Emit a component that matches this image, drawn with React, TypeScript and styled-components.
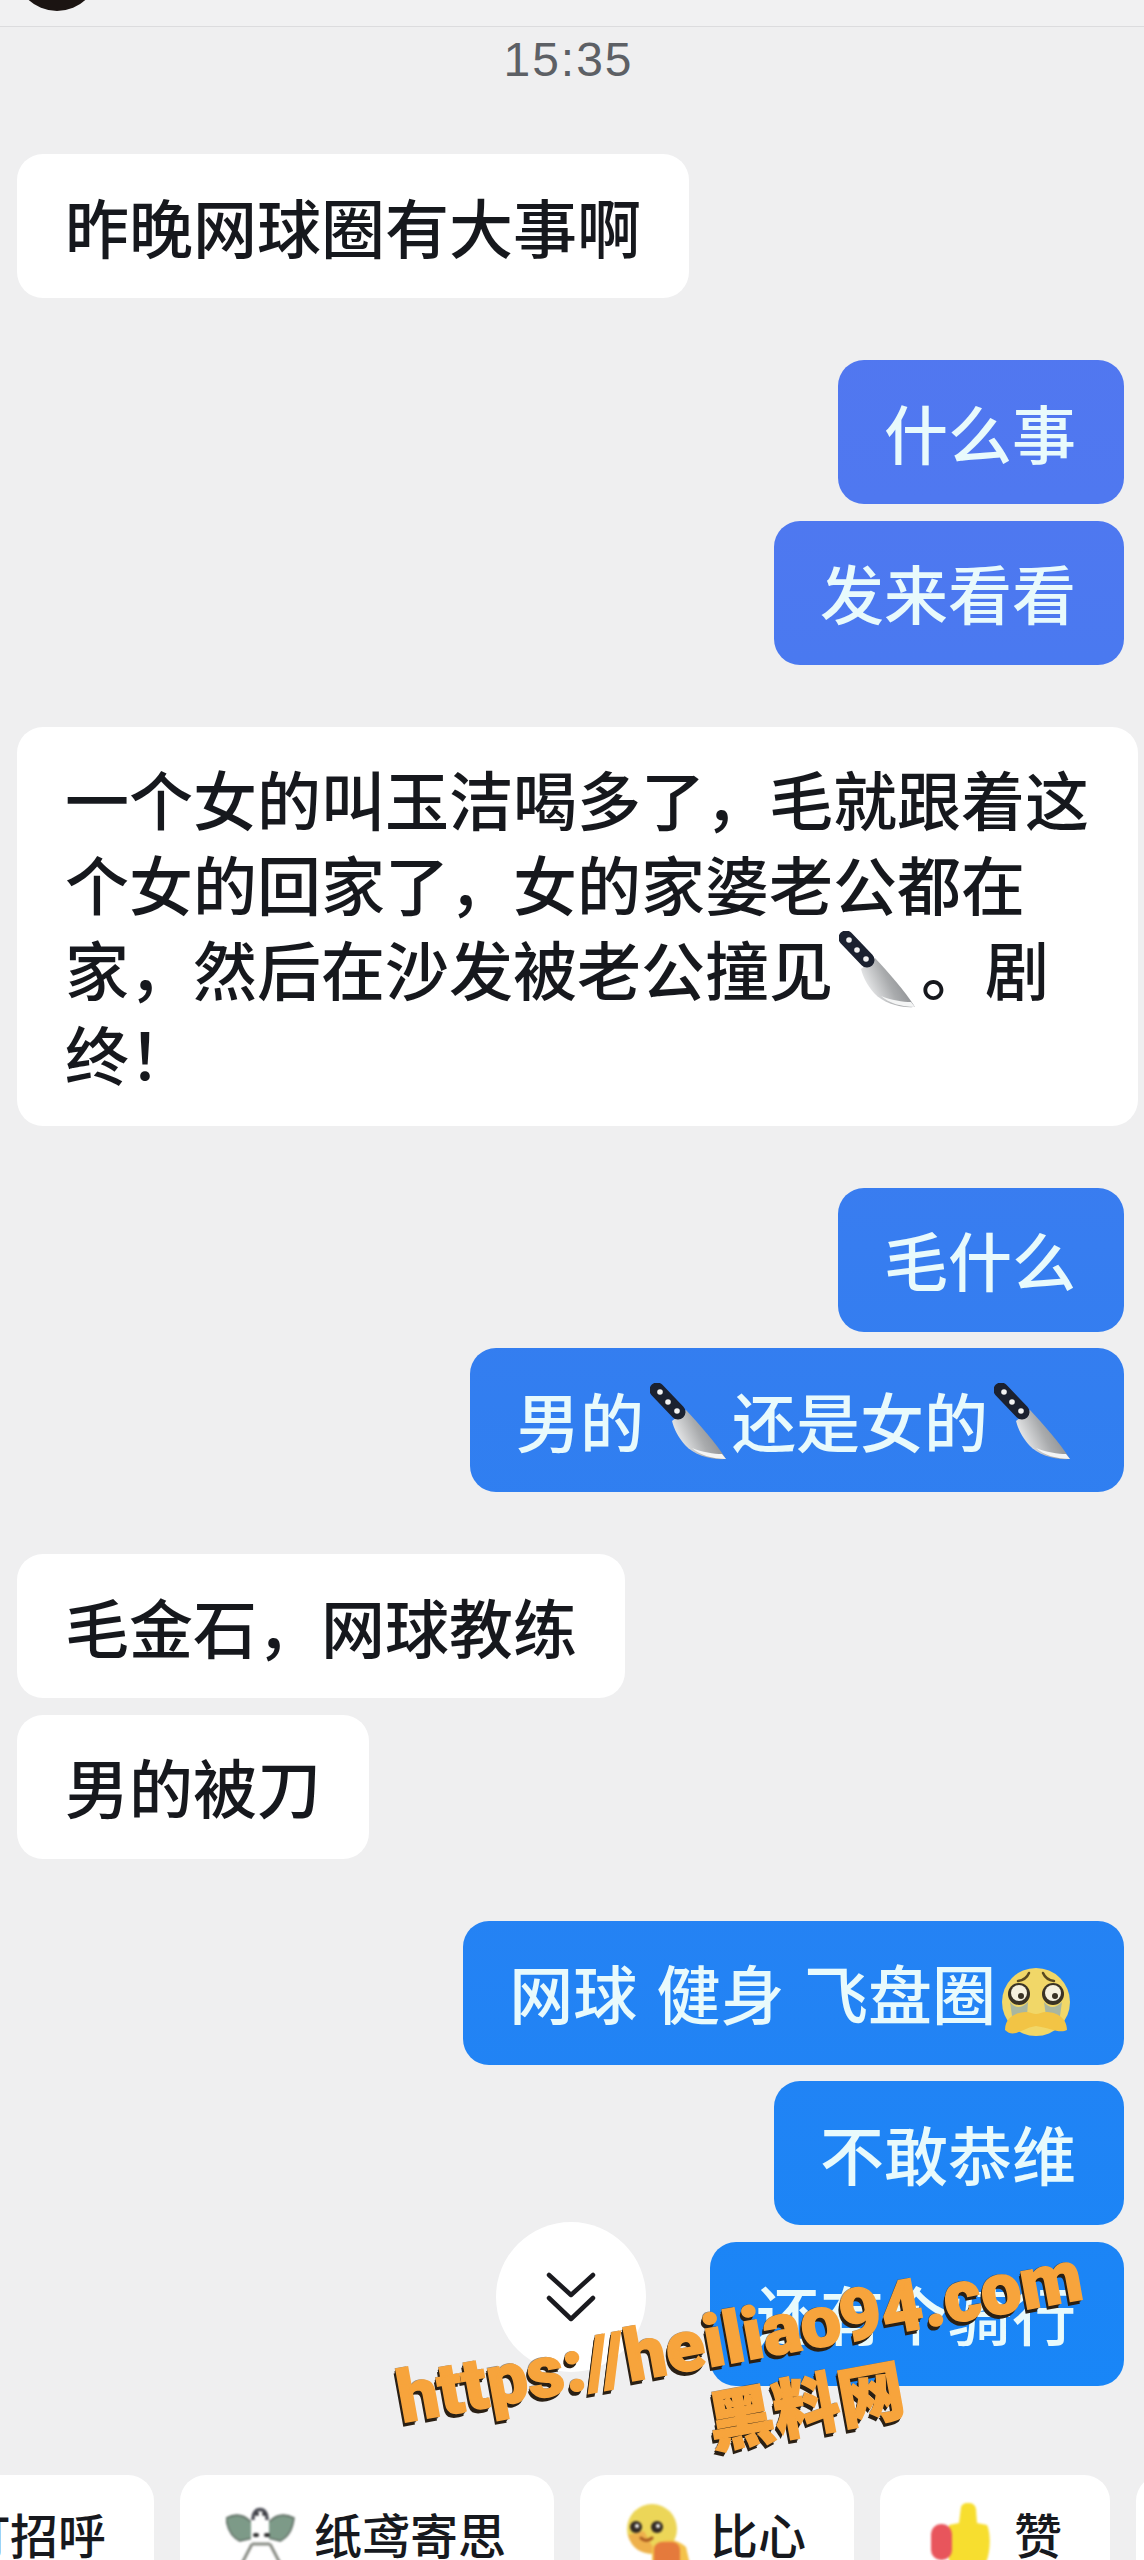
import React, { useId } from 'react';
import styled, { createGlobalStyle } from 'styled-components';

const GlobalStyle = createGlobalStyle`
  html, body { margin: 0; padding: 0; }
  body {
    background: #efeff0;
    font-family: 'Noto Sans CJK SC', 'Liberation Sans', sans-serif;
  }
`;

const Page = styled.div`
  position: relative;
  height: 100vh;
  display: flex;
  flex-direction: column;
  overflow: hidden;
  background: #efeff0;
`;

const TopBar = styled.header`
  height: 26px;
  flex-shrink: 0;
  display: flex;
  align-items: flex-end;
  padding-left: 15px;
  overflow: hidden;
  background: #f1f1f2;
  border-bottom: 1px solid #dcdcde;
`;

const Avatar = styled.div`
  width: 84px;
  height: 84px;
  flex-shrink: 0;
  margin-bottom: 15px;
  border-radius: 50%;
  background: #1b1412;
`;

const MessageList = styled.main`
  flex: 1;
  min-height: 0;
  display: flex;
  flex-direction: column;
  gap: 62px;
  padding: 0 6px 0 17px;
`;

const TimeStamp = styled.div`
  height: 64px;
  margin-bottom: 1px;
  padding-right: 18px;
  display: flex;
  align-items: center;
  justify-content: center;
  font-family: 'Liberation Sans', sans-serif;
  font-size: 48px;
  letter-spacing: 2px;
  color: #5d6065;
`;

const Group = styled.section<{ $sent?: boolean }>`
  display: flex;
  flex-direction: column;
  align-items: ${(p) => (p.$sent ? 'flex-end' : 'flex-start')};
  gap: 16.5px;
  padding-right: ${(p) => (p.$sent ? '14px' : '0')};
`;

const Bubble = styled.div<{ $sent?: boolean }>`
  padding: 28.5px 48px 30.5px ${(p) => (p.$sent ? '46px' : '48px')};
  border-radius: 26px;
  font-size: 64px;
  font-weight: 500;
  line-height: 85px;
  word-spacing: 5px;
  color: ${(p) => (p.$sent ? '#e8fafc' : '#16181d')};
  background: ${(p) =>
    p.$sent ? 'linear-gradient(180deg, #5675ef 0, #4f78f0 500px, #327ef0 1400px, #1886f7 2400px) fixed' : '#ffffff'};
`;

const EmojiSvg = styled.svg<{ $gap?: number; $lift?: number }>`
  display: inline-block;
  vertical-align: ${(p) => p.$lift ?? 11}px;
  margin: -24px ${(p) => p.$gap ?? 6}px -24px;
  filter: blur(0.4px);
`;

const ScrollDownButton = styled.button`
  position: absolute;
  left: 496px;
  top: 2222px;
  width: 150px;
  height: 150px;
  display: flex;
  align-items: center;
  justify-content: center;
  padding: 0;
  border: none;
  border-radius: 50%;
  background: #ffffff;
  color: #1a1a1f;
`;

const Watermark = styled.div`
  position: absolute;
  left: 400px;
  top: 2295px;
  width: 710px;
  transform: rotate(-10.3deg);
  transform-origin: center;
  font-family: 'Roboto', 'Noto Sans CJK SC', sans-serif;
  font-weight: 900;
  color: #f7a43c;
  -webkit-text-stroke: 1.5px #f7a43c;
  text-shadow: -1px 1px 0 #2a2015, -2px 2px 0 #2a2015, -3px 4px 0 #2a2015, -1px -1px 0 rgba(40, 30, 20, 0.5);
  white-space: nowrap;
`;

const WatermarkUrl = styled.div`
  font-size: 72px;
  line-height: 80px;
`;

const WatermarkName = styled.div`
  padding-left: 301px;
  font-size: 66px;
  line-height: 84px;
`;

const QuickBar = styled.nav`
  height: 85px;
  flex-shrink: 0;
  display: flex;
  gap: 26px;
  margin-left: -172px;
  overflow: hidden;
`;

const Chip = styled.div`
  height: 110px;
  flex-shrink: 0;
  display: flex;
  align-items: flex-start;
  gap: 18px;
  padding: 28px 48px 0 46px;
  box-sizing: border-box;
  border-radius: 26px;
  background: #ffffff;
`;

const ChipLabel = styled.span`
  font-size: 48px;
  font-weight: 500;
  line-height: 60px;
  color: #17191e;
`;

const ChipIcon = styled.svg`
  flex-shrink: 0;
  filter: blur(0.8px);
`;

const Knife: React.FC<{ gap?: number }> = ({ gap }) => {
  const id = useId();
  return (
    <EmojiSvg $gap={gap} width="76" height="77" viewBox="0 0 76 77">
      <defs>
        <linearGradient id={id} x1="0.1" y1="0.6" x2="0.8" y2="0.3">
          <stop offset="0" stopColor="#e8e9ea" />
          <stop offset="0.55" stopColor="#a9abad" />
          <stop offset="1" stopColor="#8b8d90" />
        </linearGradient>
      </defs>
      <path d="M22 38 L36 27 C50 42 66 60 76 76 C60 77 44 72 35 62 C28 54 24 46 22 38 Z" fill={`url(#${id})`} />
      <path d="M76 76 C62 76 50 72 42 65 C52 69 64 71 72 71 Z" fill="#f4f5f5" />
      <line x1="7" y1="7" x2="28" y2="29" stroke="#1b2130" strokeWidth="15" strokeLinecap="round" />
      <circle cx="10" cy="9" r="2.8" fill="#f2f2f2" />
      <circle cx="18" cy="19" r="2.8" fill="#f2f2f2" />
      <circle cx="27" cy="28" r="2.8" fill="#f2f2f2" />
    </EmojiSvg>
  );
};

const PleadingFace: React.FC = () => (
  <EmojiSvg $gap={4} $lift={3} width="72" height="72" viewBox="0 0 72 72">
    <circle cx="36" cy="34" r="34" fill="#f1d768" />
    <path d="M18 13 Q26 12 29 5 M54 13 Q46 12 43 5" fill="none" stroke="#5a4a20" strokeWidth="2.5" strokeLinecap="round" />
    <path d="M10 34 Q18 44 28 34 L27 48 L12 48 Z M44 34 Q52 44 62 34 L60 48 L46 48 Z" fill="#a9b6a0" />
    <circle cx="19" cy="26" r="11" fill="#3a3325" />
    <circle cx="53" cy="26" r="11" fill="#3a3325" />
    <circle cx="19" cy="25" r="8" fill="#f6f1df" />
    <circle cx="53" cy="25" r="8" fill="#f6f1df" />
    <circle cx="21" cy="28" r="3" fill="#3a3325" />
    <circle cx="55" cy="28" r="3" fill="#3a3325" />
    <path d="M5 62 C5 48 18 44 26 44 C30 44 33 46 36 46 C39 46 42 44 46 44 C54 44 67 48 67 62 C60 66 50 60 36 58 C22 60 14 71 5 62 Z" fill="#f2c445" />
  </EmojiSvg>
);

const ChevronsIcon: React.FC = () => (
  <svg width="50" height="50" viewBox="0 0 50 50" fill="none" stroke="currentColor" strokeWidth="4.5" strokeLinecap="round" strokeLinejoin="round">
    <path d="M3 3 L25 23 L47 3" />
    <path d="M3 26 L25 47 L47 26" />
  </svg>
);

const KiteIcon: React.FC = () => (
  <ChipIcon width="70" height="70" viewBox="0 0 70 70">
    <path d="M0 15 Q14 8 24 18 L32 20 L32 34 L14 38 C5 34 1 24 0 15 Z" fill="#7d9a88" stroke="#5e6b62" strokeWidth="1.5" />
    <path d="M68 15 Q54 8 44 18 L38 20 L38 34 L54 38 C63 34 67 24 68 15 Z" fill="#7d9a88" stroke="#5e6b62" strokeWidth="1.5" />
    <path d="M25 10 C25 0 43 0 43 10 L43 38 L25 38 Z" fill="#ffffff" />
    <path d="M27 17 C26 3 42 3 41 17" fill="none" stroke="#4c4d55" strokeWidth="3.5" />
    <circle cx="31" cy="11" r="2" fill="#3a3a40" />
    <circle cx="38" cy="11" r="2" fill="#3a3a40" />
    <ellipse cx="30" cy="32" rx="3" ry="2" fill="#2b2b2b" />
    <ellipse cx="41" cy="32" rx="3" ry="2" fill="#2b2b2b" />
    <path d="M26 41 L13 66 M44 41 L57 66 M26 41 L44 41" fill="none" stroke="#8a8d86" strokeWidth="3" />
  </ChipIcon>
);

const DuckIcon: React.FC = () => (
  <ChipIcon width="66" height="70" viewBox="0 0 66 70">
    <circle cx="26" cy="26" r="25" fill="#ecd658" />
    <path d="M2 32 C6 46 16 52 30 50 L18 28 Z" fill="#eeb04c" />
    <circle cx="10" cy="24" r="6" fill="#322a24" />
    <circle cx="31" cy="24" r="6" fill="#322a24" />
    <circle cx="11" cy="23" r="2" fill="#ffffff" />
    <circle cx="32" cy="23" r="2" fill="#ffffff" />
    <path d="M15 35 Q20 40 26 35" fill="none" stroke="#a85a20" strokeWidth="3" strokeLinecap="round" />
    <path d="M26 44 Q44 30 60 44 L66 70 L26 70 Z" fill="#f4c24a" />
    <rect x="28" y="39" width="26" height="31" rx="8" fill="#e57a3c" />
  </ChipIcon>
);

const ThumbIcon: React.FC = () => (
  <ChipIcon width="70" height="70" viewBox="-5 0 70 70">
    <path d="M30 4 C32 -2 44 -2 45 6 L46 20 L56 22 C60 30 60 50 54 62 L18 62 L18 22 L28 20 Z" fill="#f7de2f" />
    <rect x="0" y="21" width="21" height="36" rx="10" fill="#e8555c" />
  </ChipIcon>
);

const App: React.FC = () => (
  <Page lang="zh-CN">
    <GlobalStyle />
    <TopBar>
      <Avatar />
    </TopBar>

    <MessageList>
      <TimeStamp>15:35</TimeStamp>

      <Group>
        <Bubble>昨晚网球圈有大事啊</Bubble>
      </Group>

      <Group $sent>
        <Bubble $sent>什么事</Bubble>
        <Bubble $sent>发来看看</Bubble>
      </Group>

      <Group>
        <Bubble>
          一个女的叫玉洁喝多了，毛就跟着这个女的回家了，女的家婆老公都在家，然后在沙发被老公撞见
          <Knife />
          。剧终！
        </Bubble>
      </Group>

      <Group $sent>
        <Bubble $sent>毛什么</Bubble>
        <Bubble $sent>
          男的
          <Knife />
          还是女的
          <Knife />
        </Bubble>
      </Group>

      <Group>
        <Bubble>毛金石，网球教练</Bubble>
        <Bubble>男的被刀</Bubble>
      </Group>

      <Group $sent>
        <Bubble $sent>
          网球 健身 飞盘圈
          <PleadingFace />
        </Bubble>
        <Bubble $sent>不敢恭维</Bubble>
        <Bubble $sent>还有个骑行</Bubble>
      </Group>
    </MessageList>

    <QuickBar>
      <Chip>
        <KiteIcon />
        <ChipLabel>打招呼</ChipLabel>
      </Chip>
      <Chip>
        <KiteIcon />
        <ChipLabel>纸鸢寄思</ChipLabel>
      </Chip>
      <Chip>
        <DuckIcon />
        <ChipLabel>比心</ChipLabel>
      </Chip>
      <Chip>
        <ThumbIcon />
        <ChipLabel>赞</ChipLabel>
      </Chip>
      <Chip />
    </QuickBar>

    <ScrollDownButton aria-label="scroll to latest">
      <ChevronsIcon />
    </ScrollDownButton>

    <Watermark>
      <WatermarkUrl>https://heiliao94.com</WatermarkUrl>
      <WatermarkName>黑料网</WatermarkName>
    </Watermark>
  </Page>
);

export default App;
